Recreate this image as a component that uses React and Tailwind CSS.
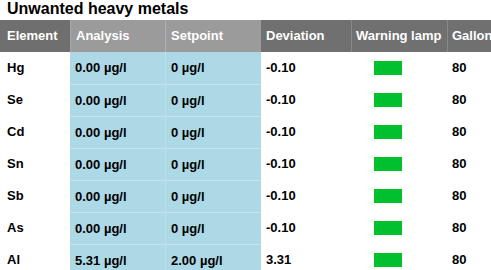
export default function App() {
  const rows = [
    ["Hg", "0.00 µg/l", "0 µg/l", "-0.10", "80"],
    ["Se", "0.00 µg/l", "0 µg/l", "-0.10", "80"],
    ["Cd", "0.00 µg/l", "0 µg/l", "-0.10", "80"],
    ["Sn", "0.00 µg/l", "0 µg/l", "-0.10", "80"],
    ["Sb", "0.00 µg/l", "0 µg/l", "-0.10", "80"],
    ["As", "0.00 µg/l", "0 µg/l", "-0.10", "80"],
    ["Al", "5.31 µg/l", "2.00 µg/l", "3.31", "80"],
  ];
  return (
    <div className="w-[491px] h-[270px] overflow-hidden bg-white font-['Liberation_Sans',Arial,sans-serif] text-black">
      <div className="h-[20px] pl-[7px] text-[16px] leading-[18px] font-bold whitespace-nowrap">Unwanted heavy metals</div>
      <div className="flex h-[32px] text-[13px] font-bold text-white whitespace-nowrap">
        <div className="w-[70px] shrink-0 bg-[#6f6f6f] flex items-center pl-[7px]">Element</div>
        <div className="w-[95px] shrink-0 bg-[#9b9b9b] border-l border-[#a8a8a8] flex items-center pl-[5px]">Analysis</div>
        <div className="w-[96px] shrink-0 bg-[#9b9b9b] border-l border-[#b0b0b0] flex items-center pl-[5px]">Setpoint</div>
        <div className="w-[90px] shrink-0 bg-[#707070] flex items-center pl-[5px]">Deviation</div>
        <div className="w-[96px] shrink-0 bg-[#707070] border-l border-[#888888] flex items-center pl-[4px]">Warning lamp</div>
        <div className="w-[60px] shrink-0 bg-[#707070] border-l border-[#888888] flex items-center pl-[4px]">Gallon</div>
      </div>
      {rows.map((r, i) => (
        <div key={i} className="flex h-[32px] text-[13px] font-bold whitespace-nowrap">
          <div className="w-[70px] shrink-0 flex items-center pl-[7px]">{r[0]}</div>
          <div className={`w-[95px] shrink-0 bg-[#add8e6] flex items-center pl-[5px] ${i > 0 ? "border-t border-[#c4e3ee]" : ""}`}>{r[1]}</div>
          <div className={`w-[96px] shrink-0 bg-[#add8e6] border-l border-[#bbdfeb] flex items-center pl-[5px] ${i > 0 ? "border-t border-t-[#c4e3ee]" : ""}`}>{r[2]}</div>
          <div className="w-[90px] shrink-0 flex items-center pl-[5px]">{r[3]}</div>
          <div className="w-[96px] shrink-0 flex items-center pl-[23px]">
            <div className="w-[28px] h-[14px] bg-[#00c02e]" />
          </div>
          <div className="w-[60px] shrink-0 flex items-center pl-[5px]">{r[4]}</div>
        </div>
      ))}
    </div>
  );
}
